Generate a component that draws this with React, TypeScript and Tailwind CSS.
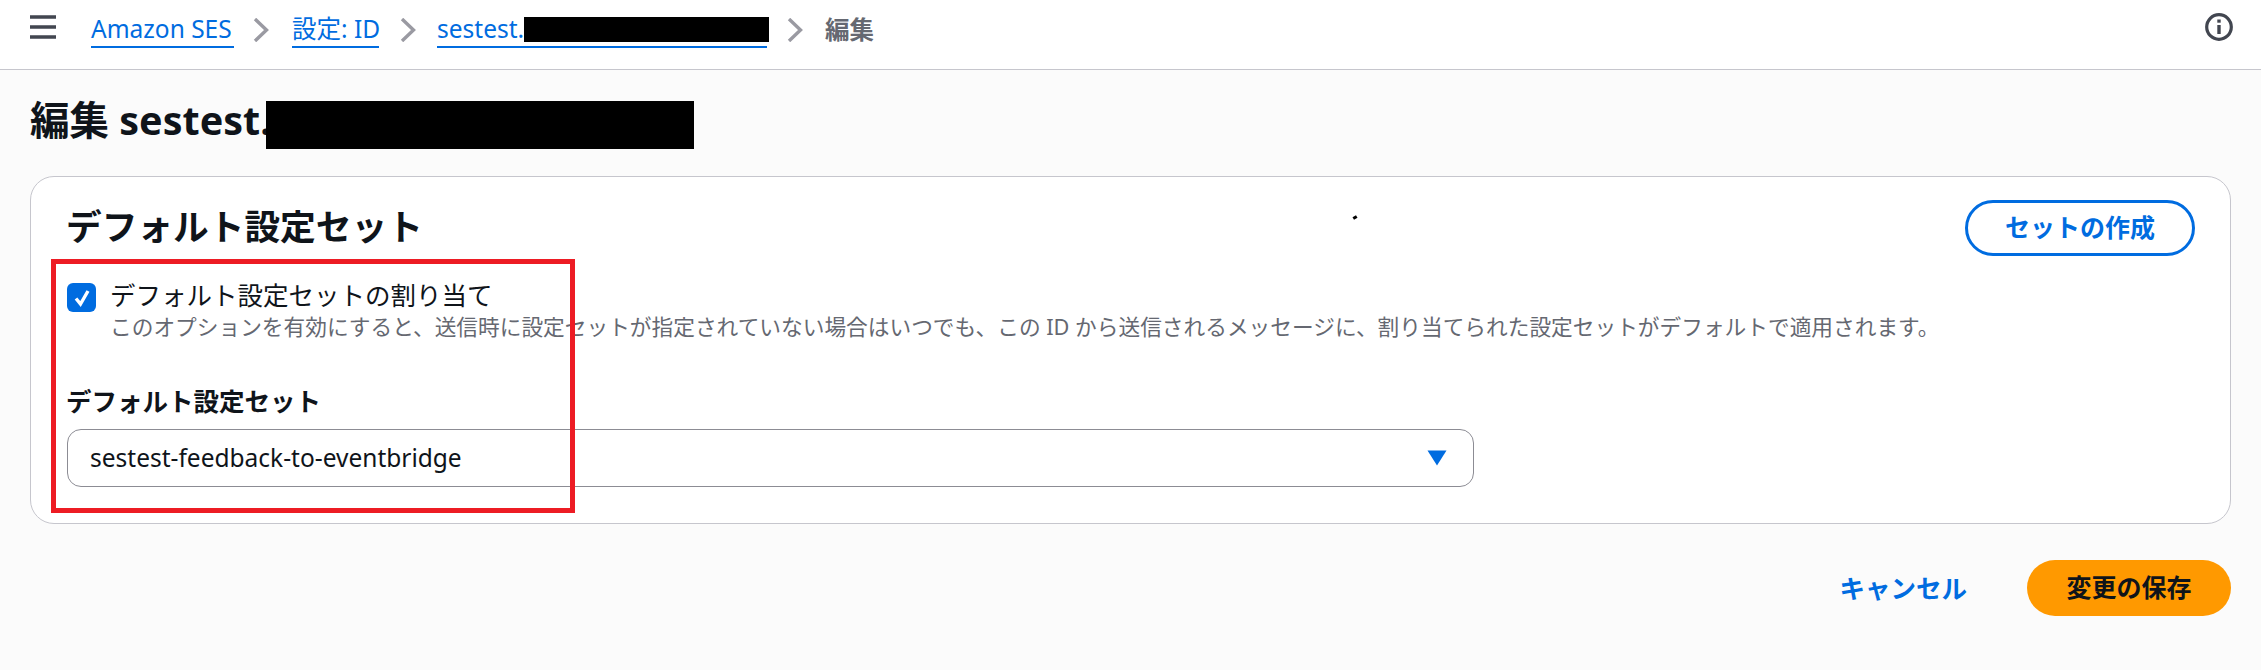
import React from "react";

const font = { fontFamily: '"Noto Sans", "Noto Sans CJK JP", sans-serif' };

function Chevron() {
  return (
    <svg width="16" height="24" viewBox="0 0 16 24" fill="none" className="shrink-0">
      <path d="M2 1 L13.5 12 L2 23" stroke="#9a9aa2" strokeWidth="3.4" />
    </svg>
  );
}

export default function App() {
  return (
    <div className="relative min-h-screen bg-[#fbfbfb] text-[#0f141a]" style={font}>
      <header className="flex h-[70px] items-center border-b border-[#c6c6cd] bg-white pl-[30px] pr-[28px]">
        <svg width="26" height="24" viewBox="0 0 26 24" className="mb-[15px] shrink-0">
          <path d="M0 2h26M0 12h26M0 22h26" stroke="#424650" strokeWidth="3.4" />
        </svg>
        <nav className="ml-[35px] mb-[10px] flex items-center text-[24.5px] leading-[34px]">
          <a className="w-[143px] whitespace-nowrap border-b-2 border-[#006ce0] text-[#006ce0]">Amazon SES</a>
          <span className="ml-[19px] mr-[23px]"><Chevron /></span>
          <a className="w-[87px] whitespace-nowrap border-b-2 border-[#006ce0] text-[#006ce0]">設定: ID</a>
          <span className="ml-[21px] mr-[21px]"><Chevron /></span>
          <a className="flex w-[330px] items-center whitespace-nowrap border-b-2 border-[#006ce0] text-[#006ce0]">
            sestest.
            <span className="mb-[-2px] -mr-[2px] ml-auto h-[25px] w-[247px] bg-black" />
          </a>
          <span className="ml-[20px] mr-[22px]"><Chevron /></span>
          <span className="font-bold text-[#656871]">編集</span>
        </nav>
        <svg width="28" height="28" viewBox="0 0 28 28" fill="none" className="mb-[15px] ml-auto shrink-0">
          <circle cx="14" cy="14" r="12.3" stroke="#424650" strokeWidth="3.2" />
          <path d="M14 12v9" stroke="#424650" strokeWidth="3.4" />
          <path d="M14 6.5v3.2" stroke="#424650" strokeWidth="3.4" />
        </svg>
      </header>

      <main className="px-[30px]">
        <h1 className="flex h-[106px] items-center pb-[4px] text-[39.5px] font-bold leading-none whitespace-nowrap">
          編集 sestest.
          <span className="-ml-[5px] mt-[8px] h-[48px] w-[428px] bg-black" />
        </h1>

        <section className="h-[348px] rounded-[24px] border border-[#c6c6cd] bg-white pl-[35px] pr-[35px] pt-[20px]">
          <div className="flex items-start justify-between">
            <h2 className="pt-[5px] text-[35.7px] font-bold leading-[48px]">デフォルト設定セット</h2>
            <button className="mt-[3px] h-[56px] w-[230px] rounded-full border-[3px] border-[#006ce0] text-[25px] font-bold text-[#006ce0]">
              セットの作成
            </button>
          </div>

          <div className="mt-[26px] flex gap-[14px] pl-[1px]">
            <div className="mt-[1px] flex h-[29px] w-[29px] shrink-0 items-center justify-center rounded-[6px] bg-[#006ce0]">
              <svg width="18" height="20" viewBox="0 0 18 20" fill="none">
                <path d="M3 10.5 L7.5 16 L15 3" stroke="white" strokeWidth="3.4" />
              </svg>
            </div>
            <div className="-mt-[3px]">
              <div className="text-[25.5px] leading-[32px]">デフォルト設定セットの割り当て</div>
              <div className="text-[21.7px] leading-[32px] text-[#656871] whitespace-nowrap">
                このオプションを有効にすると、送信時に設定セットが指定されていない場合はいつでも、この ID から送信されるメッセージに、割り当てられた設定セットがデフォルトで適用されます。
              </div>
            </div>
          </div>

          <div className="mt-[41px] text-[25.5px] font-bold leading-[34px]">デフォルト設定セット</div>
          <div className="ml-[1px] mt-[11px] flex h-[58px] w-[1407px] items-center justify-between rounded-[14px] border border-[#8c8c94] bg-white pl-[22px] pr-[26px] text-[24.5px]">
            <span>sestest-feedback-to-eventbridge</span>
            <svg width="20" height="16" viewBox="0 0 20 16">
              <path d="M0.5 0.5 H19.5 L10 15.5 Z" fill="#006ce0" />
            </svg>
          </div>
        </section>

        <div className="mt-[36px] flex items-center justify-end">
          <a className="text-[25.5px] font-bold text-[#006ce0]">キャンセル</a>
          <button className="ml-[60px] h-[56px] w-[204px] rounded-full bg-[#ff9900] text-[25px] font-bold text-[#0f141a]">
            変更の保存
          </button>
        </div>
      </main>

      <div className="absolute left-[51px] top-[259px] h-[254px] w-[524px] border-[5px] border-[#ed1c24]" />
      <div className="absolute left-[1353px] top-[216px] h-[3px] w-[4px] rotate-[-30deg] bg-black" />
    </div>
  );
}
